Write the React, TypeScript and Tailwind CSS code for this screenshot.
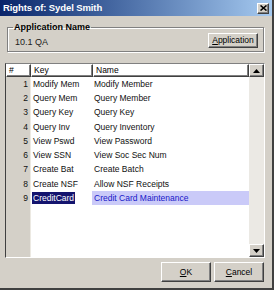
import React from 'react'

type Row = { n: number; key: string; name: string }

const rows: Row[] = [
  { n: 1, key: 'Modify Mem', name: 'Modify Member' },
  { n: 2, key: 'Query Mem', name: 'Query Member' },
  { n: 3, key: 'Query Key', name: 'Query Key' },
  { n: 4, key: 'Query Inv', name: 'Query Inventory' },
  { n: 5, key: 'View Pswd', name: 'View Password' },
  { n: 6, key: 'View SSN', name: 'View Soc Sec Num' },
  { n: 7, key: 'Create Bat', name: 'Create Batch' },
  { n: 8, key: 'Create NSF', name: 'Allow NSF Receipts' },
  { n: 9, key: 'CreditCard', name: 'Credit Card Maintenance' },
]

// raised win classic bevel
const raised =
  'border border-t-white border-l-white border-r-[#404040] border-b-[#404040] shadow-[inset_-1px_-1px_0_#808080]'

function WinButton({ label, hot, className }: { label: string; hot: number; className: string }) {
  return (
    <div className={`${raised} bg-[#d4d0c8] flex items-center justify-center text-black ${className}`}>
      <span>
        {label.slice(0, hot)}
        <span className="underline">{label[hot]}</span>
        {label.slice(hot + 1)}
      </span>
    </div>
  )
}

function Arrow({ up }: { up?: boolean }) {
  return (
    <svg width="7" height="4" viewBox="0 0 7 4">
      <path d={up ? 'M0 4 L3.5 0 L7 4 Z' : 'M0 0 L3.5 4 L7 0 Z'} fill="#000" />
    </svg>
  )
}

export default function App() {
  return (
    <div
      className="w-[274px] h-[290px] bg-[#d4d0c8] flex flex-col border-r-2 border-b-2 border-r-[#404040] border-b-[#404040] overflow-hidden text-[8.5px] leading-none"
      style={{ fontFamily: '"Liberation Sans", Arial, sans-serif' }}
    >
      {/* title bar */}
      <div className="h-[16px] shrink-0 flex items-center justify-between pl-[3px] pr-[3px] bg-gradient-to-r from-[#0a246a] to-[#a6caf0]">
        <span className="text-white font-bold text-[9.5px] tracking-[-0.1px]">Rights of: Sydel Smith</span>
        <div className={`${raised} w-[12px] h-[11px] bg-[#d4d0c8] flex items-center justify-center`}>
          <svg width="7" height="6" viewBox="0 0 7 6">
            <path d="M0.5 0.5 L6.5 5.5 M6.5 0.5 L0.5 5.5" stroke="#000" strokeWidth="1.6" />
          </svg>
        </div>
      </div>

      <div className="flex-1 flex flex-col pl-[5px] pr-[7px] pt-[7px]">
        {/* group box */}
        <fieldset className="ml-[2px] mr-[1px] h-[29px] border border-[#808080] shadow-[1px_1px_0_#fff,inset_1px_1px_0_#fff] px-[6px] flex items-center justify-between">
          <legend className="px-[1px] ml-[-1px] font-bold text-[9px] text-black">Application Name</legend>
          <div className="flex items-center justify-between w-full mt-[1px]">
            <span className="text-[#202020] text-[9px] pl-[1px] mt-[4px]">10.1 QA</span>
            <WinButton label="Application" hot={0} className="w-[50px] h-[15px] mr-[-1px]" />
          </div>
        </fieldset>

        {/* grid */}
        <div className="mt-[11px] h-[195px] flex border border-t-[#808080] border-l-[#404040] border-r-white border-b-white bg-white">
          <div className="flex-1 flex flex-col">
            {/* header */}
            <div className="flex h-[13px] shrink-0">
              <div className={`${raised} w-[25px] pl-[2px] flex items-center`}>#</div>
              <div className={`${raised} w-[62px] pl-[2px] flex items-center`}>Key</div>
              <div className={`${raised} flex-1 pl-[2px] flex items-center`}>Name</div>
            </div>
            <div className="flex-1 flex">
              <div className="w-[25px] bg-[#d4d0c8] border-r border-r-[#ece9e2] flex flex-col">
                {rows.map(r => (
                  <div key={r.n} className="h-[14.25px] flex items-center justify-end pr-[2px] text-[#101010]">
                    {r.n}
                  </div>
                ))}
              </div>
              <div className="flex-1 flex flex-col">
                {rows.map(r => {
                  const sel = r.n === 9
                  return (
                    <div key={r.n} className="h-[14.25px] flex">
                      <div className="w-[61px] flex items-center pl-[1px]">
                        <span className={sel ? 'bg-[#14146e] text-white px-[1px] py-[2px]' : 'text-[#101010] pl-[1px]'}>{r.key}</span>
                      </div>
                      <div className={`flex-1 flex items-center pl-[2px] ${sel ? 'bg-[#cacaf8] text-[#1818c8]' : 'text-[#101010]'}`}>
                        {r.name}
                      </div>
                    </div>
                  )
                })}
              </div>
            </div>
          </div>
          {/* scrollbar */}
          <div className="w-[15px] flex flex-col bg-[#ebe9e4]">
            <div className={`${raised} h-[13px] bg-[#d4d0c8] flex items-center justify-center`}>
              <Arrow up />
            </div>
            <div className="flex-1" />
            <div className={`${raised} h-[13px] bg-[#d4d0c8] flex items-center justify-center`}>
              <Arrow />
            </div>
          </div>
        </div>

        {/* buttons */}
        <div className="mt-[4px] flex justify-end gap-[3px] pr-[1px]">
          <WinButton label="OK" hot={0} className="w-[50px] h-[20px]" />
          <WinButton label="Cancel" hot={0} className="w-[50px] h-[20px]" />
        </div>
      </div>
    </div>
  )
}
